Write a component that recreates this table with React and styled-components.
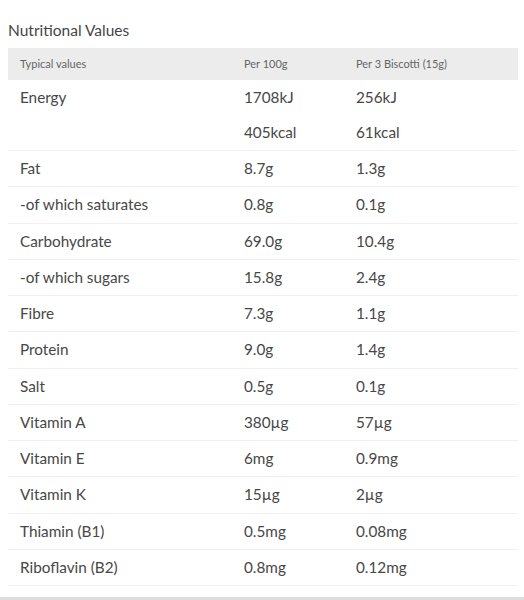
import React from "react";
import styled, { createGlobalStyle } from "styled-components";

const Global = createGlobalStyle`
  html, body { margin: 0; padding: 0; background: #fff; }
  body { font-family: Lato, "Open Sans", sans-serif; color: #444; }
`;

const Page = styled.div`
  width: 524px;
  height: 600px;
  box-sizing: border-box;
  padding: 20px 6px 0 8px;
  display: flex;
  flex-direction: column;
  position: relative;
`;

const Title = styled.h2`
  margin: 0 0 8px;
  font-size: 15.5px;
  line-height: 20px;
  font-weight: 400;
  color: #454545;
`;

const Table = styled.div`
  display: flex;
  flex-direction: column;
`;

const Row = styled.div`
  display: grid;
  grid-template-columns: 224px 112px 1fr;
  background: ${(p) => (p.$head ? "#ececec" : "transparent")};
  border-bottom: ${(p) => (p.$head ? "none" : "1px solid #f0f0f0")};
`;

const Cell = styled.div`
  padding-left: 12px;
  font-size: ${(p) => (p.$head ? "11px" : "15.3px")};
  line-height: ${(p) => (p.$head ? "32px" : "35.25px")};
  color: ${(p) => (p.$head ? "#666" : "#474747")};
  white-space: nowrap;
`;

const Line = styled.div`
  line-height: 35px;
`;

const Footer = styled.div`
  position: absolute;
  left: 0;
  right: 0;
  bottom: 0;
  height: 3px;
  background: #ddd;
`;

const rows = [
  ["Fat", "8.7g", "1.3g"],
  ["-of which saturates", "0.8g", "0.1g"],
  ["Carbohydrate", "69.0g", "10.4g"],
  ["-of which sugars", "15.8g", "2.4g"],
  ["Fibre", "7.3g", "1.1g"],
  ["Protein", "9.0g", "1.4g"],
  ["Salt", "0.5g", "0.1g"],
  ["Vitamin A", "380µg", "57µg"],
  ["Vitamin E", "6mg", "0.9mg"],
  ["Vitamin K", "15µg", "2µg"],
  ["Thiamin (B1)", "0.5mg", "0.08mg"],
  ["Riboflavin (B2)", "0.8mg", "0.12mg"],
];

export default function App() {
  return (
    <>
      <Global />
      <Page>
        <Title>Nutritional Values</Title>
        <Table>
          <Row $head>
            <Cell $head>Typical values</Cell>
            <Cell $head>Per 100g</Cell>
            <Cell $head>Per 3 Biscotti (15g)</Cell>
          </Row>
          <Row>
            <Cell>
              <Line>Energy</Line>
            </Cell>
            <Cell>
              <Line>1708kJ</Line>
              <Line>405kcal</Line>
            </Cell>
            <Cell>
              <Line>256kJ</Line>
              <Line>61kcal</Line>
            </Cell>
          </Row>
          {rows.map(([a, b, c]) => (
            <Row key={a}>
              <Cell>{a}</Cell>
              <Cell>{b}</Cell>
              <Cell>{c}</Cell>
            </Row>
          ))}
        </Table>
        <Footer />
      </Page>
    </>
  );
}
